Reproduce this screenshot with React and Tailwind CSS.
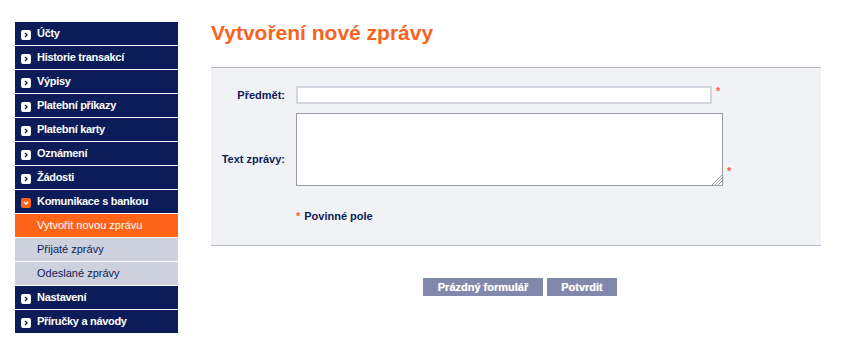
import React from 'react';

const NAVY = '#0c1c58';

const menu = [
  { label: 'Účty' },
  { label: 'Historie transakcí' },
  { label: 'Výpisy' },
  { label: 'Platební příkazy' },
  { label: 'Platební karty' },
  { label: 'Oznámení' },
  { label: 'Žádosti' },
  { label: 'Komunikace s bankou', open: true },
  { label: 'Vytvořit novou zprávu', sub: true, active: true },
  { label: 'Přijaté zprávy', sub: true },
  { label: 'Odeslané zprávy', sub: true },
  { label: 'Nastavení' },
  { label: 'Příručky a návody' },
];

const Bullet = ({ open }) => (
  <span
    className={`mt-[3px] flex h-[10px] w-[10px] shrink-0 items-center justify-center rounded-[2px] ${open ? 'bg-[#ff6418]' : 'bg-white'}`}
  >
    {open ? (
      <svg width="10" height="10" viewBox="0 0 10 10">
        <path d="M3 4 L5 6 L7 4" fill="none" stroke="#ffffff" strokeWidth="1.3" />
      </svg>
    ) : (
      <svg width="10" height="10" viewBox="0 0 10 10">
        <path d="M4 3 L6 5 L4 7" fill="none" stroke={NAVY} strokeWidth="1.3" />
      </svg>
    )}
  </span>
);

const MenuItem = ({ item }) => {
  if (item.sub) {
    return (
      <div
        className={`flex h-[23px] items-center pl-[22px] text-[11px] ${item.active ? 'bg-[#ff6418] text-white' : 'bg-[#cdd0dd] text-[#0c1c58]'}`}
      >
        {item.label}
      </div>
    );
  }
  return (
    <div className="flex h-[23px] items-center gap-[6px] bg-[#0c1c58] pl-[6px] text-[11px] font-bold text-white">
      <Bullet open={item.open} />
      <span className="tracking-[-0.3px]">{item.label}</span>
    </div>
  );
};

const Star = () => <span className="ml-[4px] text-[11px] font-bold leading-none text-[#ff5a3c]">*</span>;

export default function App() {
  return (
    <div
      className="flex min-h-[361px] w-[842px] bg-white pt-[22px] text-[#0c1c58]"
      style={{ fontFamily: '"Liberation Sans", Arial, sans-serif' }}
    >
      {/* Sidebar */}
      <nav className="ml-[15px] flex w-[163px] flex-col gap-px self-start bg-white">
        {menu.map((m) => (
          <MenuItem key={m.label} item={m} />
        ))}
      </nav>

      {/* Main */}
      <main className="ml-[33px] w-[610px]">
        <h1 className="-mt-[1px] h-[24px] text-[21px] font-bold leading-[24px] text-[#f8621e]">
          Vytvoření nové zprávy
        </h1>

        <div className="mt-[22px] border-y border-[#b6b8c6] bg-[#f1f2f6] pb-[22px] pt-[18px]">
          <div className="grid grid-cols-[74px_1fr] gap-x-[11px] gap-y-[9px]">
            <label className="flex items-center justify-end text-[11px] font-bold">Předmět:</label>
            <div className="flex items-start">
              <input className="h-[18px] w-[416px] border-2 border-[#d2d4de] bg-white outline-none" />
              <Star />
            </div>

            <label className="flex items-center justify-end pt-[20px] text-[11px] font-bold">Text zprávy:</label>
            <div className="flex items-end">
              <div className="relative">
                <textarea className="block h-[73px] w-[427px] resize-none border border-[#9a9aa5] bg-white outline-none" />
                <svg className="absolute bottom-[1px] right-[1px]" width="11" height="11" viewBox="0 0 11 11">
                  <path d="M1 11 L11 1 M4 11 L11 4 M7 11 L11 7" stroke="#9a9aa5" strokeWidth="1" />
                </svg>
              </div>
              <span className="mb-[4px]">
                <Star />
              </span>
            </div>

            <div />
            <div className="mt-[14px] flex items-center text-[11px] font-bold leading-[14px]">
              <span className="mr-[4px] text-[#ff5a3c]">*</span>
              Povinné pole
            </div>
          </div>
        </div>

        <div className="mt-[32px] flex gap-[4px] pl-[212px]">
          <button className="h-[18px] w-[120px] bg-[#8088ab] text-[11px] font-bold text-white [text-shadow:0_0_1px_rgba(255,255,255,0.6)]">
            Prázdný formulář
          </button>
          <button className="h-[18px] w-[70px] bg-[#8088ab] text-[11px] font-bold text-white [text-shadow:0_0_1px_rgba(255,255,255,0.6)]">
            Potvrdit
          </button>
        </div>
      </main>
    </div>
  );
}
